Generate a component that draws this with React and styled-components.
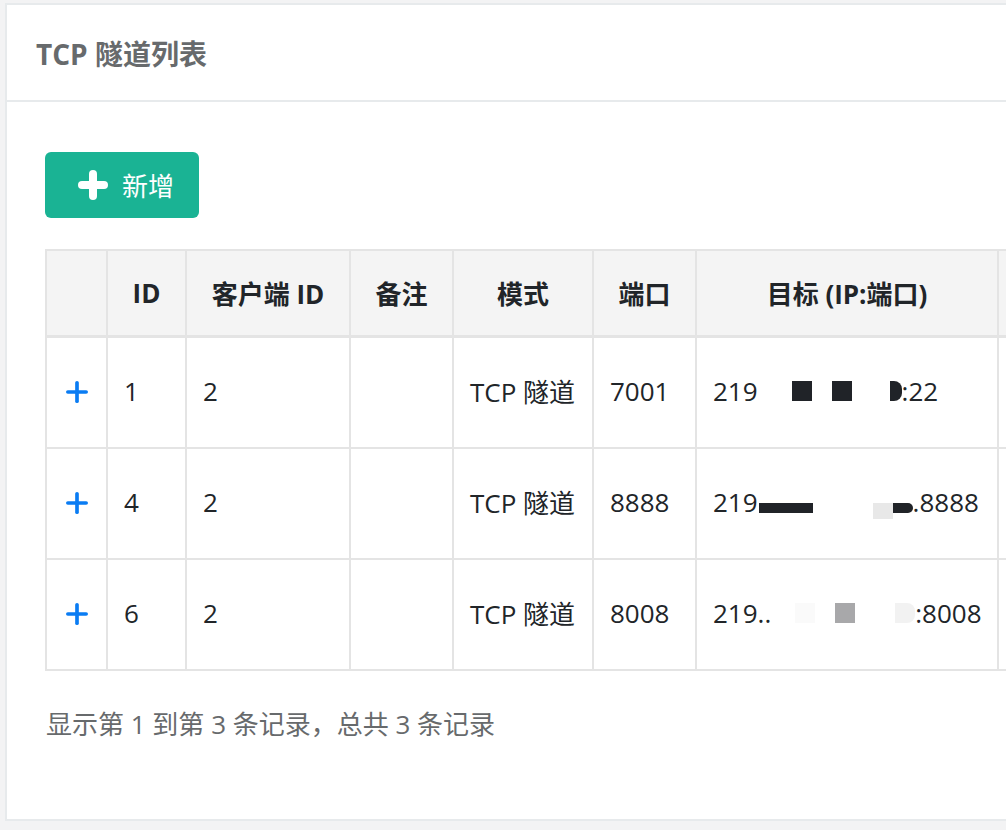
import React from 'react'
import styled, { createGlobalStyle } from 'styled-components'

const GlobalStyle = createGlobalStyle`
  html, body {
    margin: 0;
    padding: 0;
    background: #f3f3f4;
    overflow: hidden;
  }
  body {
    font-family: "Open Sans", "Noto Sans CJK SC", sans-serif;
    -webkit-font-smoothing: antialiased;
  }
`;

const Page = styled.div`
  padding: 3px 0 0 5px;
  width: 1200px;
`;

const Card = styled.section`
  background: #fff;
  border: 2px solid #e7eaec;
  border-right: none;
  width: 1150px;
`;

const CardTitle = styled.div`
  height: 95px;
  display: flex;
  align-items: center;
  padding: 0 29px;
  border-bottom: 2px solid #e7eaec;
  h5 {
    margin: 0;
    font-size: 28px;
    font-weight: 700;
    color: #676a6c;
  }
`;

const CardBody = styled.div`
  padding: 50px 40px 77px 38px;
`;

const Button = styled.button`
  display: flex;
  align-items: center;
  gap: 14px;
  height: 66px;
  width: 154px;
  padding: 0 0 0 33px;
  border: none;
  border-radius: 6px;
  background: #1ab394;
  color: #fff;
  font-family: "Open Sans", "Noto Sans CJK SC", sans-serif;
  font-size: 26px;
  cursor: pointer;
`;

const Table = styled.table`
  margin-top: 31px;
  border-collapse: collapse;
  table-layout: fixed;
  width: 1060px;
  color: #212529;
  font-size: 26px;
  th, td {
    border: 2px solid #e4e4e4;
  }
`;

const Th = styled.th`
  height: 83px;
  background: #f4f4f4;
  font-weight: 700;
  text-align: center;
  padding: 0 8px 1px;
  border-bottom-width: 3px !important;
`;

const Td = styled.td`
  height: 105px;
  padding: 0 16px 4px;
  text-align: left;
  white-space: nowrap;
`;

const IpBox = styled.div`
  display: flex;
  align-items: center;
`;

const Mask = styled.span`
  display: inline-block;
  flex: none;
  width: ${p => p.w}px;
  height: ${p => p.h}px;
  background: ${p => p.bg || '#202328'};
  margin-left: ${p => p.ml || 0}px;
  margin-top: ${p => p.mt || 0}px;
  border-radius: ${p => p.r || '0'};
`;

const Footer = styled.div`
  margin-top: 33px;
  font-size: 26px;
  color: #676a6c;
  padding-left: 1px;
`;

const PlusIcon = ({ size, stroke, color }) => (
  <svg width={size} height={size} viewBox="0 0 30 30">
    <line x1="15" y1={stroke / 2} x2="15" y2={30 - stroke / 2} stroke={color} strokeWidth={stroke} strokeLinecap="round" />
    <line x1={stroke / 2} y1="15" x2={30 - stroke / 2} y2="15" stroke={color} strokeWidth={stroke} strokeLinecap="round" />
  </svg>
);

const ExpandIcon = styled.div`
  display: flex;
  justify-content: center;
  margin-top: 3px;
`;

const widths = [61, 79, 164, 103, 140, 103, 302, 108];
const heads = ['', 'ID', '客户端 ID', '备注', '模式', '端口', '目标 (IP:端口)', ''];

const rows = [
  {
    id: 1, port: 7001,
    ip: (
      <IpBox>
        219
        <Mask w={20} h={20} ml={34} />
        <Mask w={20} h={20} ml={20} />
        <Mask w={12} h={20} ml={38} r="0 8px 8px 0" />
        :22
      </IpBox>
    ),
  },
  {
    id: 4, port: 8888,
    ip: (
      <IpBox>
        219
        <Mask w={54} h={10} ml={1} mt={12} />
        <Mask w={20} h={16} ml={60} mt={18} bg="#e8e8e8" />
        <Mask w={20} h={10} mt={12} r="0 6px 6px 0" />
        .8888
      </IpBox>
    ),
  },
  {
    id: 6, port: 8008,
    ip: (
      <IpBox>
        219..
        <Mask w={20} h={20} ml={24} bg="#fafafa" />
        <Mask w={20} h={20} ml={20} bg="#a8a8aa" />
        <Mask w={20} h={20} ml={40} bg="#f2f2f2" r="0 8px 8px 0" />
        :8008
      </IpBox>
    ),
  },
];

const App = () => {
  return (
    <>
      <GlobalStyle />
      <Page>
        <Card>
          <CardTitle>
            <h5>TCP 隧道列表</h5>
          </CardTitle>
          <CardBody>
            <Button>
              <PlusIcon size={30} stroke={8} color="#fff" />
              新增
            </Button>
            <Table>
              <colgroup>
                {widths.map((w, i) => (
                  <col key={i} style={{ width: w }} />
                ))}
              </colgroup>
              <thead>
                <tr>
                  {heads.map((h, i) => (
                    <Th key={i}>{h}</Th>
                  ))}
                </tr>
              </thead>
              <tbody>
                {rows.map(r => (
                  <tr key={r.id}>
                    <Td>
                      <ExpandIcon>
                        <PlusIcon size={22} stroke={5} color="#0a7cf3" />
                      </ExpandIcon>
                    </Td>
                    <Td>{r.id}</Td>
                    <Td>2</Td>
                    <Td></Td>
                    <Td>TCP 隧道</Td>
                    <Td>{r.port}</Td>
                    <Td>{r.ip}</Td>
                    <Td></Td>
                  </tr>
                ))}
              </tbody>
            </Table>
            <Footer>显示第 1 到第 3 条记录，总共 3 条记录</Footer>
          </CardBody>
        </Card>
      </Page>
    </>
  )
}

export default App
